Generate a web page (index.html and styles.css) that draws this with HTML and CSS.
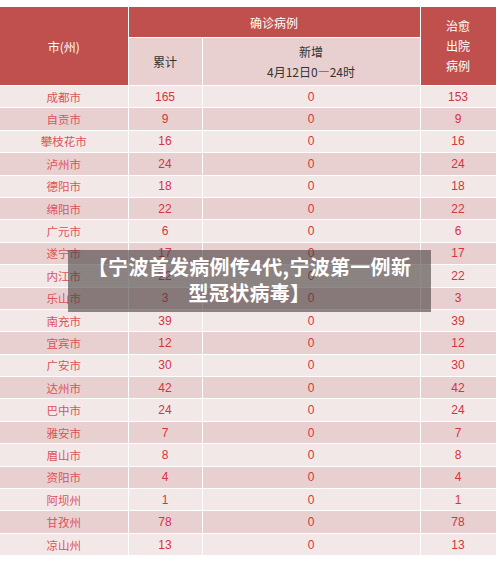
FILE: index.html
```html
<!DOCTYPE html>
<html lang="zh-CN">
<head>
    <meta charset="UTF-8">
    <title>四川省确诊病例</title>
    <link rel="stylesheet" href="styles.css">
</head>
<body>
    <div class="wrap">
        <table class="cases">
            <colgroup>
                <col class="c-city">
                <col class="c-total">
                <col class="c-new">
                <col class="c-cured">
            </colgroup>
            <thead>
                <tr class="h1">
                    <th rowspan="2" class="red">市(州)</th>
                    <th colspan="2" class="red">确诊病例</th>
                    <th rowspan="2" class="red cured">治愈<br>出院<br>病例</th>
                </tr>
                <tr class="h2">
                    <th class="sub">累计</th>
                    <th class="sub">新增<br>4月12日0—24时</th>
                </tr>
            </thead>
            <tbody>
                <tr><td class="city">成都市</td><td>165</td><td>0</td><td>153</td></tr>
                <tr><td class="city">自贡市</td><td>9</td><td>0</td><td>9</td></tr>
                <tr><td class="city">攀枝花市</td><td>16</td><td>0</td><td>16</td></tr>
                <tr><td class="city">泸州市</td><td>24</td><td>0</td><td>24</td></tr>
                <tr><td class="city">德阳市</td><td>18</td><td>0</td><td>18</td></tr>
                <tr><td class="city">绵阳市</td><td>22</td><td>0</td><td>22</td></tr>
                <tr><td class="city">广元市</td><td>6</td><td>0</td><td>6</td></tr>
                <tr><td class="city">遂宁市</td><td>17</td><td>0</td><td>17</td></tr>
                <tr><td class="city">内江市</td><td>22</td><td>0</td><td>22</td></tr>
                <tr><td class="city">乐山市</td><td>3</td><td>0</td><td>3</td></tr>
                <tr><td class="city">南充市</td><td>39</td><td>0</td><td>39</td></tr>
                <tr><td class="city">宜宾市</td><td>12</td><td>0</td><td>12</td></tr>
                <tr><td class="city">广安市</td><td>30</td><td>0</td><td>30</td></tr>
                <tr><td class="city">达州市</td><td>42</td><td>0</td><td>42</td></tr>
                <tr><td class="city">巴中市</td><td>24</td><td>0</td><td>24</td></tr>
                <tr><td class="city">雅安市</td><td>7</td><td>0</td><td>7</td></tr>
                <tr><td class="city">眉山市</td><td>8</td><td>0</td><td>8</td></tr>
                <tr><td class="city">资阳市</td><td>4</td><td>0</td><td>4</td></tr>
                <tr><td class="city">阿坝州</td><td>1</td><td>0</td><td>1</td></tr>
                <tr><td class="city">甘孜州</td><td>78</td><td>0</td><td>78</td></tr>
                <tr><td class="city">凉山州</td><td>13</td><td>0</td><td>13</td></tr>
            </tbody>
        </table>
        <div class="caption">【宁波首发病例传4代,宁波第一例新<br>型冠状病毒】</div>
    </div>
</body>
</html>
```

FILE: styles.css
```css
* {
    box-sizing: border-box;
}

html, body {
    margin: 0;
    padding: 0;
    background-color: #ffffff;
    font-family: "Noto Sans CJK SC", "Noto Sans", sans-serif;
}

.wrap {
    position: relative;
    width: 496px;
    padding: 6px 0 0 0;
}

.cases {
    width: 496px;
    table-layout: fixed;
    border-collapse: collapse;
    font-size: 12px;
    text-align: center;
}

.c-city { width: 128px; }
.c-total { width: 74px; }
.c-new { width: 218px; }
.c-cured { width: 76px; }

.cases th,
.cases td {
    border: 1px solid #ffffff;
    padding: 0;
    font-weight: normal;
}

.cases tr:first-child th:first-child,
.cases td:first-child {
    border-left: 0;
}

.h1 {
    height: 31px;
}

.h2 {
    height: 48px;
}

.red {
    background-color: #c0504d;
    color: #ffffff;
}

.cured {
    line-height: 20px;
    padding-top: 6px;
}

.sub {
    background-color: #e8d0d0;
    color: #333333;
    line-height: 20px;
}

.cases tbody tr {
    height: 22.4px;
    background-color: #f3e8e8;
    color: #d4343c;
    font-family: "Liberation Sans", "Noto Sans CJK SC", sans-serif;
    font-size: 12px;
}

.cases tbody tr:nth-child(even) {
    background-color: #e8d0d1;
}

.cases td.city {
    color: #dc5258;
    font-family: "Noto Sans CJK SC", sans-serif;
    font-size: 11.5px;
}

.caption {
    position: absolute;
    left: 68px;
    top: 250px;
    width: 363px;
    height: 62px;
    padding-top: 4px;
    background-color: rgba(70, 62, 62, 0.6);
    color: #ffffff;
    font-size: 20px;
    font-weight: bold;
    letter-spacing: 0.3px;
    line-height: 26px;
    text-align: center;
}
```
